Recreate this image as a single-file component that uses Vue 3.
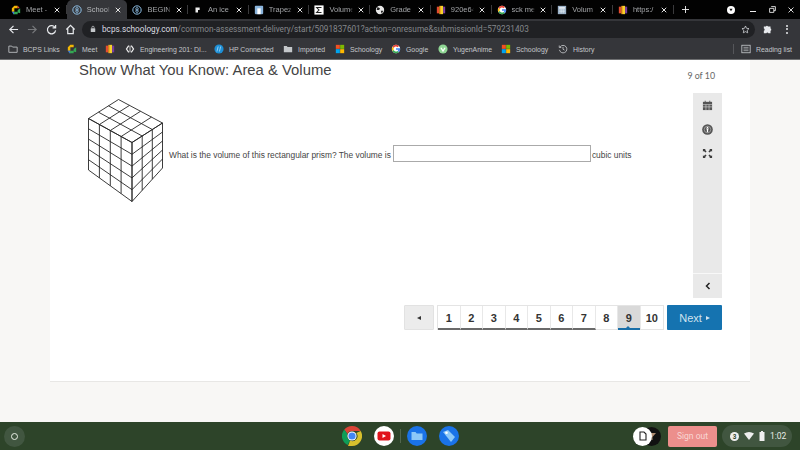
<script setup>
const tabs = [
  { id: 'meet', label: 'Meet - u', icon: 'meet' },
  { id: 's1', label: 'Schoolc', icon: 's', active: true },
  { id: 's2', label: 'BEGINN', icon: 's' },
  { id: 'ice', label: 'An ice c', icon: 'ice' },
  { id: 'trap', label: 'Trapezi', icon: 'trap' },
  { id: 'vol', label: 'Volume', icon: 'sigma' },
  { id: 'grade', label: 'Grade (', icon: 'globe' },
  { id: '920', label: '920e64', icon: 'bars' },
  { id: 'sck', label: 'sck me', icon: 'google' },
  { id: 'vol2', label: 'Volum', icon: 'calc' },
  { id: 'https', label: 'https:/', icon: 'bars' }
]

const bookmarksLeft = [
  { label: 'BCPS Links', icon: 'folderOpen', width: 59 },
  { label: 'Meet', icon: 'meet', width: 38 },
  { label: '', icon: 'bars', width: 20 },
  { label: 'Engineering 201: DI...', icon: 'code', width: 89 },
  { label: 'HP Connected', icon: 'hp', width: 69 },
  { label: 'Imported', icon: 'folder', width: 52 },
  { label: 'Schoology', icon: 'ms', width: 56 },
  { label: 'Google', icon: 'google', width: 47 },
  { label: 'YugenAnime', icon: 'yugen', width: 63 },
  { label: 'Schoology', icon: 'ms', width: 57 },
  { label: 'History', icon: 'history', width: 50 }
]

const pages = [1, 2, 3, 4, 5, 6, 7, 8, 9, 10].map(n => ({
  n,
  done: n <= 7,
  current: n === 9
}))

// prism corners, measured off the picture
const apex = [38.5, 0.5]
const left = [8.5, 19.5]
const right = [82.5, 24]
const front = [52, 43.5]
const frontBottom = [52, 102.5]
const leftBottom = [8.5, 71]
const rightBottom = [82.5, 69]

const lerp = (a, b, t) => [a[0] + (b[0] - a[0]) * t, a[1] + (b[1] - a[1]) * t]
const seg = (a, b) => `M${a[0].toFixed(1)} ${a[1].toFixed(1)}L${b[0].toFixed(1)} ${b[1].toFixed(1)}`

const prismLines = []
for (let i = 0; i <= 4; i++) {
  const t = i / 4
  prismLines.push(seg(lerp(left, front, t), lerp(leftBottom, frontBottom, t)))
  prismLines.push(seg(lerp(left, front, t), lerp(apex, right, t)))
}
for (let i = 0; i <= 3; i++) {
  const t = i / 3
  prismLines.push(seg(lerp(front, right, t), lerp(frontBottom, rightBottom, t)))
  prismLines.push(seg(lerp(left, apex, t), lerp(front, right, t)))
}
for (let i = 0; i <= 5; i++) {
  const t = i / 5
  prismLines.push(seg(lerp(left, leftBottom, t), lerp(front, frontBottom, t)))
  prismLines.push(seg(lerp(front, frontBottom, t), lerp(right, rightBottom, t)))
}
const prismPath = prismLines.join('')
</script>

<template>
  <div class="screen">
    <div class="tabstrip">
      <div v-for="tab in tabs" :key="tab.id" class="tab" :class="{ active: tab.active }">
        <svg class="favicon" viewBox="0 0 12 12">
          <template v-if="tab.icon === 'meet'">
            <path d="M1 4 4 1h4v3H4v4H1z" fill="#f2b705" />
            <path d="M8 1v3h2V3z" fill="#e8453c" />
            <path d="M1 8h3v3H3z" fill="#3b78e7" />
            <path d="M4 8h4V6l3-2v6L8 9v2H3z" fill="#34a853" />
          </template>
          <template v-else-if="tab.icon === 's'">
            <circle cx="6" cy="6" r="5" fill="none" stroke="#8fc1e8" stroke-width="1.2" />
            <circle cx="6" cy="4.6" r="1.5" fill="none" stroke="#8fc1e8" stroke-width="1" />
            <circle cx="6" cy="7.4" r="1.5" fill="none" stroke="#8fc1e8" stroke-width="1" />
          </template>
          <path v-else-if="tab.icon === 'ice'" d="M3 3h5v3H6v3H3z" fill="#eee" />
          <template v-else-if="tab.icon === 'trap'">
            <rect x="1" y="1" width="10" height="10" rx="1" fill="#8ab4dc" />
            <path d="M4 4h4v7H4z" fill="#fff" />
          </template>
          <template v-else-if="tab.icon === 'sigma'">
            <rect x="0.5" y="0.5" width="11" height="11" fill="#fff" />
            <path d="M9 3H3.2L6 6 3.2 9H9" fill="none" stroke="#222" stroke-width="1.3" />
          </template>
          <template v-else-if="tab.icon === 'globe'">
            <circle cx="6" cy="6" r="5" fill="#e8e8e8" />
            <path d="M3 2.5 6 4 5 6 2 6zM7 7h3L8 10.5z" fill="#222" />
          </template>
          <template v-else-if="tab.icon === 'bars'">
            <rect x="1" y="2" width="3" height="8" fill="#e34b2f" />
            <rect x="4" y="1" width="2" height="10" fill="#f4a81d" />
            <rect x="6" y="1" width="2.5" height="10" fill="#f6d32b" />
            <rect x="8.5" y="2" width="2.5" height="8" fill="#7a3fa0" />
          </template>
          <template v-else-if="tab.icon === 'google'">
            <circle cx="6" cy="6" r="5" fill="#fff" />
            <path d="M6 1a5 5 0 0 1 3.5 1.4L8 3.8A3 3 0 0 0 3.3 4.7L1.7 3.5A5 5 0 0 1 6 1z" fill="#ea4335" />
            <path d="M1.7 3.5 3.3 4.7a3 3 0 0 0 0 2.6L1.7 8.5a5 5 0 0 1 0-5z" fill="#fbbc05" />
            <path d="M1.7 8.5 3.3 7.3A3 3 0 0 0 8 8.3L9.5 9.6A5 5 0 0 1 1.7 8.5z" fill="#34a853" />
            <path d="M11 6c0 1.5-.5 2.7-1.5 3.6L8 8.3c.5-.4.8-.8.9-1.3H6V5h4.9z" fill="#4285f4" />
          </template>
          <template v-else>
            <rect x="1" y="1" width="10" height="10" fill="#9db3c9" />
            <rect x="2.5" y="2.5" width="7" height="2" fill="#e6edf3" />
            <path d="M2.5 6h7M2.5 8h7M5 5v5M7.5 5v5" stroke="#e6edf3" stroke-width="0.7" />
          </template>
        </svg>
        <span class="tab-label">{{ tab.label }}</span>
        <svg class="tab-close" viewBox="0 0 8 8"><path d="M1 1l6 6M7 1 1 7" /></svg>
      </div>
      <svg class="new-tab" viewBox="0 0 10 10"><path d="M5 0v10M0 5h10" /></svg>
      <div class="strip-right">
        <svg class="media-dot" viewBox="0 0 10 10">
          <circle cx="5" cy="5" r="5" fill="#fff" />
          <path d="M3 3.5h4L5 6.5z" fill="#111" />
        </svg>
        <span class="win-min"></span>
        <svg class="win-restore" viewBox="0 0 8 8">
          <path d="M2.5 .7h4.8v4.6H5.5M.7 2.7h4.8v4.6H.7z" />
        </svg>
        <svg class="win-close" viewBox="0 0 8 8"><path d="M.7.7l6.6 6.6M7.3.7.7 7.3" /></svg>
      </div>
    </div>

    <div class="toolbar">
      <svg class="nav" viewBox="0 0 12 12"><path d="M11 6H2M6 2 2 6l4 4" stroke="#e8eaed" /></svg>
      <svg class="nav" viewBox="0 0 12 12"><path d="M1 6h9M6 2l4 4-4 4" stroke="#77797c" /></svg>
      <svg class="nav" viewBox="0 0 12 12"><path d="M10 4A4.5 4.5 0 1 0 10.5 7M10.5 1v3.3H7.2" stroke="#e8eaed" /></svg>
      <svg class="nav" viewBox="0 0 12 12"><path d="M1.5 6 6 1.5 10.500 6M3 5v5.500h6V5" stroke="#e8eaed" /></svg>
      <div class="omnibox">
        <svg class="lock" viewBox="0 0 8 10">
          <rect x="1" y="4" width="6" height="5" rx="0.8" fill="#c4c7ca" />
          <path d="M2.5 4V2.8a1.5 1.5 0 0 1 3 0V4" fill="none" stroke="#c4c7ca" />
        </svg>
        <span class="url"><b>bcps.schoology.com</b>/common-assessment-delivery/start/5091837601?action=onresume&amp;submissionId=579231403</span>
        <svg class="star" viewBox="0 0 12 12">
          <path d="M6 1.3 7.400 4.400l3.300.4-2.400 2.300.6 3.300L6 8.800 3.100 10.400l.6-3.300L1.300 4.800l3.300-.4z" />
        </svg>
      </div>
      <svg class="puzzle" viewBox="0 0 12 12">
        <path d="M1 3h2.5a1.3 1.3 0 0 1 2.500 0H9v2.500a1.300 1.300 0 0 1 0 2.500V11H6.500a1.300 1.300 0 0 0-2.500 0H1V8a1.300 1.300 0 0 0 0-2.500z" fill="#e8eaed" />
      </svg>
      <div class="dots"><i></i><i></i><i></i></div>
    </div>

    <div class="bookmarks">
      <div
        v-for="(b, i) in bookmarksLeft"
        :key="i"
        class="bookmark"
        :style="{ width: b.width + 'px' }"
      >
        <svg class="bm-icon" viewBox="0 0 12 12">
          <template v-if="b.icon === 'folderOpen'">
            <path d="M1 2.500h3.500l1 1.200H11V10H1z" fill="none" stroke="#c4c7ca" />
          </template>
          <path v-else-if="b.icon === 'folder'" d="M1 2.500h3.500l1 1.200H11V10H1z" fill="#c4c7ca" />
          <template v-else-if="b.icon === 'meet'">
            <path d="M1 4 4 1h4v3H4v4H1z" fill="#f2b705" />
            <path d="M1 8h3v3H3z" fill="#3b78e7" />
            <path d="M4 8h4V6l3-2v6L8 9v2H3z" fill="#34a853" />
          </template>
          <template v-else-if="b.icon === 'bars'">
            <rect x="1" y="2" width="3" height="8" fill="#e34b2f" />
            <rect x="4" y="1" width="2" height="10" fill="#f4a81d" />
            <rect x="6" y="1" width="2.5" height="10" fill="#f6d32b" />
            <rect x="8.5" y="2" width="2.5" height="8" fill="#7a3fa0" />
          </template>
          <template v-else-if="b.icon === 'code'">
            <path d="M4.500 2 1.800 6l2.700 4M7.500 2l2.700 4-2.700 4" fill="none" stroke="#eee" stroke-width="1.500" />
            <path d="M6 2v8" stroke="#eee" />
          </template>
          <template v-else-if="b.icon === 'hp'">
            <circle cx="6" cy="6" r="5.500" fill="#1d8fd6" />
            <path d="M5 3 3.500 9M8 3 6.500 9" stroke="#d6eefc" stroke-width="0.8" />
          </template>
          <template v-else-if="b.icon === 'ms'">
            <rect x="1" y="1" width="4.800" height="4.800" fill="#f25022" />
            <rect x="6.200" y="1" width="4.800" height="4.800" fill="#7fba00" />
            <rect x="1" y="6.200" width="4.800" height="4.800" fill="#00a4ef" />
            <rect x="6.200" y="6.200" width="4.800" height="4.800" fill="#ffb900" />
          </template>
          <template v-else-if="b.icon === 'google'">
            <circle cx="6" cy="6" r="5" fill="#fff" />
            <path d="M6 1a5 5 0 0 1 3.500 1.400L8 3.800A3 3 0 0 0 3.300 4.700L1.700 3.500A5 5 0 0 1 6 1z" fill="#ea4335" />
            <path d="M1.700 3.500 3.300 4.700a3 3 0 0 0 0 2.600L1.700 8.500a5 5 0 0 1 0-5z" fill="#fbbc05" />
            <path d="M1.700 8.500 3.300 7.300A3 3 0 0 0 8 8.300L9.500 9.600A5 5 0 0 1 1.700 8.500z" fill="#34a853" />
            <path d="M11 6c0 1.500-.5 2.700-1.500 3.600L8 8.300c.5-.4.800-.8.900-1.300H6V5h4.900z" fill="#4285f4" />
          </template>
          <template v-else-if="b.icon === 'yugen'">
            <circle cx="6" cy="6" r="5.500" fill="#8fd694" />
            <path d="M3.500 4.500 6 8.500l2.500-4" fill="none" stroke="#fff" stroke-width="1.500" />
          </template>
          <template v-else>
            <path d="M2.500 3.500A4.500 4.500 0 1 1 1.700 7M1.500 1.800v2.400h2.400M6 3.500V6.300l1.800 1" fill="none" stroke="#c4c7ca" />
          </template>
        </svg>
        <span v-if="b.label" class="bm-label">{{ b.label }}</span>
      </div>
      <div class="reading">
        <svg class="bm-icon" viewBox="0 0 12 12">
          <rect x="1" y="1.500" width="10" height="9" fill="none" stroke="#c4c7ca" />
          <path d="M3 4h6M3 6h6M3 8h6" stroke="#c4c7ca" stroke-width="0.8" />
        </svg>
        <span class="bm-label">Reading list</span>
      </div>
    </div>

    <main class="page">
      <section class="card">
        <div class="card-main">
          <h1 class="title">Show What You Know: Area &amp; Volume</h1>
          <div class="question">
            <svg class="prism" viewBox="0 0 89 104" width="89" height="104">
              <path :d="prismPath" fill="none" stroke="#262626" stroke-width="0.9" />
            </svg>
            <span class="q-text">What is the volume of this rectangular prism? The volume is</span>
            <input class="answer" type="text" />
            <span class="q-text">cubic units</span>
          </div>
        </div>

        <div class="side">
          <div class="counter">9 of 10</div>
          <div class="tools">
            <svg class="tool" viewBox="0 0 12 12">
              <rect x="1" y="2" width="10" height="9" fill="#555" />
              <path d="M1 5h10M1 7.500h10M4.300 5v6M7.700 5v6" stroke="#e9e9e9" stroke-width="0.6" />
              <path d="M3.500 .8v2M8.500 .8v2" stroke="#555" />
            </svg>
            <svg class="tool" viewBox="0 0 12 12">
              <circle cx="6" cy="6" r="5.800" fill="#555" />
              <circle cx="6" cy="6" r="3.600" fill="none" stroke="#ddd" stroke-width="0.5" />
              <circle cx="6" cy="3.800" r="0.900" fill="#fff" />
              <path d="M4.300 5h3.400L6.700 6.200V9H5.300V6.200z" fill="#fff" />
            </svg>
            <svg class="tool" viewBox="0 0 12 12">
              <path d="M1 1h3.200L3.200 2l1.800 1.800-1.200 1.200L2 3.200 1 4.200zM11 1v3.200L10 3.200 8.200 5 7 3.800 8.800 2 7.800 1zM1 11V7.800l1 1L3.800 7 5 8.200 3.200 10l1 1zM11 11H7.800l1-1L7 8.200 8.200 7 10 8.800l1-1z" fill="#3c3c3c" />
            </svg>
            <div class="collapse">
              <svg viewBox="0 0 8 8" width="8" height="8"><path d="M5.500 1 2.500 4l3 3" fill="none" stroke="#222" stroke-width="1.500" /></svg>
            </div>
          </div>
        </div>

        <nav class="pager">
          <button class="prev" type="button"><span class="arrow-left"></span></button>
          <div class="pages">
            <div
              v-for="p in pages"
              :key="p.n"
              class="page-btn"
              :class="{ done: p.done, current: p.current }"
            >{{ p.n }}</div>
          </div>
          <button class="next" type="button">Next<span class="arrow-right"></span></button>
        </nav>
      </section>
    </main>

    <footer class="shelf">
      <div class="launcher"><span></span></div>
      <div class="apps">
        <div class="app">
          <svg viewBox="0 0 20 20" width="20" height="20">
            <path d="M10 0a10 10 0 0 1 8.700 5H10a5 5 0 0 0-4.600 3L2.300 3.500A10 10 0 0 1 10 0z" fill="#db4437" />
            <path d="M2.300 3.500 5.400 8a5 5 0 0 0 2.700 6.600L5.600 19A10 10 0 0 1 2.300 3.500z" fill="#0f9d58" />
            <path d="M18.700 5A10 10 0 0 1 10 20H6l2.100-5.400A5 5 0 0 0 14.300 7z" fill="#d7c02d" />
            <circle cx="10" cy="10" r="4.600" fill="#fff" />
            <circle cx="10" cy="10" r="3.600" fill="#4285f4" />
          </svg>
          <i class="dot"></i>
        </div>
        <div class="app">
          <svg viewBox="0 0 20 20" width="20" height="20">
            <circle cx="10" cy="10" r="10" fill="#fff" />
            <rect x="3.500" y="5.500" width="13" height="9" rx="2" fill="#e0141c" />
            <path d="M8.500 8v4l3.500-2z" fill="#fff" />
          </svg>
        </div>
        <div class="app-sep"></div>
        <div class="app">
          <svg viewBox="0 0 20 20" width="20" height="20">
            <circle cx="10" cy="10" r="10" fill="#1a73e8" />
            <path d="M4.500 6h4l1.200 1.500h5.800V14h-11z" fill="#8cc8f8" />
          </svg>
          <i class="dot"></i>
        </div>
        <div class="app">
          <svg viewBox="0 0 20 20" width="20" height="20">
            <circle cx="10" cy="10" r="10" fill="#1a73e8" />
            <path d="M4 6 9 4l7 7-4 5z" fill="#8cc8f8" />
            <circle cx="7.500" cy="6.800" r="1.300" fill="#fff" />
          </svg>
          <i class="dot"></i>
        </div>
      </div>
      <div class="tray">
        <div class="holding">
          <div class="hold-file">
            <svg viewBox="0 0 10 10" width="10" height="10"><path d="M2 1h4l2 2v6H2z" fill="none" stroke="#222" stroke-width="1.100" /></svg>
          </div>
          <div class="hold-img">
            <svg viewBox="0 0 10 10" width="10" height="10"><path d="M1 2h8L5.500 6v3h-1V6z" fill="#b08d72" /></svg>
          </div>
        </div>
        <div class="signout">Sign out</div>
        <div class="status">
          <span class="badge">3</span>
          <svg viewBox="0 0 10 8" width="10" height="8"><path d="M0 1.500Q5-1.500 10 1.500L5 8z" fill="#eee" /></svg>
          <svg viewBox="0 0 6 10" width="6" height="10"><path d="M2 0h2v1h1.500v9h-5V1H2z" fill="#eee" /></svg>
          <span class="clock">1:02</span>
        </div>
      </div>
    </footer>
  </div>
</template>

<style>
html, body { margin: 0; padding: 0; }
</style>

<style scoped>
.screen {
  width: 800px;
  height: 450px;
  display: flex;
  flex-direction: column;
  overflow: hidden;
  font-family: "Liberation Sans", Arial, sans-serif;
  background: #f8f7f5;
}

/* browser chrome */
.tabstrip {
  height: 19px;
  flex: none;
  background: #020202;
  display: flex;
  align-items: center;
  padding-left: 6px;
}
.tab {
  width: 60.7px;
  height: 19px;
  box-sizing: border-box;
  padding: 0 6.5px 0 5px;
  display: flex;
  align-items: center;
  gap: 5px;
  color: #a4a6a9;
  font-size: 7.5px;
  position: relative;
}
.tab:not(:last-of-type)::after {
  content: "";
  position: absolute;
  right: 0;
  top: 5px;
  bottom: 5px;
  width: 1px;
  background: #3a3a3c;
}
.tab.active {
  background: #35363a;
  border-radius: 5px 5px 0 0;
  color: #b4b6b9;
}
.tab.active::after { display: none; }
.favicon { width: 10px; height: 10px; flex: none; }
.tab-label {
  flex: 1;
  min-width: 0;
  overflow: hidden;
  white-space: nowrap;
  -webkit-mask-image: linear-gradient(to right, #000 85%, transparent);
  mask-image: linear-gradient(to right, #000 85%, transparent);
}
.tab-close {
  width: 6px;
  height: 6px;
  flex: none;
  stroke: #e6e6e6;
  stroke-width: 1.3;
  fill: none;
}
.new-tab {
  width: 7px;
  height: 7px;
  margin-left: 8px;
  stroke: #f0f0f0;
  stroke-width: 1.3;
  flex: none;
}
.strip-right {
  margin-left: auto;
  display: flex;
  align-items: center;
  padding-right: 6px;
}
.media-dot { width: 8px; height: 8px; margin-right: 15px; }
.win-min {
  width: 6px;
  height: 1.5px;
  background: #eee;
  margin: 4px 12.5px 0 0;
}
.win-restore {
  width: 7px;
  height: 7px;
  margin-right: 12.5px;
  fill: none;
  stroke: #eee;
  stroke-width: 1;
}
.win-close {
  width: 6px;
  height: 6px;
  fill: none;
  stroke: #eee;
  stroke-width: 1.2;
}
.toolbar {
  height: 20px;
  flex: none;
  background: #35363a;
  display: flex;
  align-items: center;
  padding-left: 7.5px;
}
.nav {
  width: 11px;
  height: 11px;
  margin-right: 8px;
  fill: none;
  stroke-width: 1.3;
  flex: none;
}
.omnibox {
  width: 673px;
  height: 17px;
  margin-left: -1.5px;
  background: #202124;
  border-radius: 9px;
  display: flex;
  align-items: center;
  padding-left: 7.5px;
  box-sizing: border-box;
}
.lock { width: 6px; height: 8px; flex: none; margin-right: 6.5px; }
.url {
  font-size: 8.22px;
  color: #85888c;
  white-space: nowrap;
  font-family: "Roboto", "Liberation Sans", sans-serif;
}
.url b { color: #dadce0; font-weight: 400; }
.star {
  width: 9px;
  height: 9px;
  margin-left: auto;
  margin-right: 5.5px;
  fill: none;
  stroke: #dadce0;
  stroke-width: 1;
  flex: none;
}
.puzzle { width: 10px; height: 10px; margin-left: 8px; flex: none; }
.dots {
  display: flex;
  flex-direction: column;
  gap: 1.5px;
  margin-left: 13px;
}
.dots i {
  width: 2px;
  height: 2px;
  border-radius: 50%;
  background: #e8eaed;
  display: block;
}
.bookmarks {
  height: 21px;
  flex: none;
  box-sizing: border-box;
  background: #35363a;
  border-bottom: 1px solid #6e6f71;
  display: flex;
  align-items: center;
  padding-left: 8px;
}
.bookmark {
  display: flex;
  align-items: center;
  gap: 5px;
  flex: none;
  overflow: hidden;
}
.bm-icon { width: 10px; height: 10px; flex: none; }
.bm-label {
  font-size: 6.9px;
  color: #c4c7ca;
  white-space: nowrap;
}
.reading {
  margin-left: auto;
  padding-left: 7px;
  margin-right: 8px;
  border-left: 1px solid #55565a;
  display: flex;
  align-items: center;
  gap: 5px;
}

/* page */
.page {
  flex: 1;
  min-height: 0;
  padding: 0 50px;
}
.card {
  height: 322px;
  background: #fff;
  border-bottom: 1px solid #e8e7e5;
  box-sizing: border-box;
  position: relative;
  display: grid;
  grid-template-columns: 1fr 29px;
  grid-template-rows: 1fr auto;
  padding: 0 28px 52px 29px;
}
.card-main { min-width: 0; }
.title {
  margin: 2px 0 0;
  font-size: 14.85px;
  line-height: 17px;
  font-weight: 400;
  color: #444;
}
.question {
  margin-top: 20px;
  display: flex;
  align-items: center;
  height: 104px;
  margin-left: 1px;
  width: 570px;
}
.prism { flex: none; }
.q-text {
  font-size: 8.4px;
  color: #444;
  white-space: nowrap;
  margin-top: 8px;
}
.answer {
  width: 198px;
  height: 17px;
  box-sizing: border-box;
  margin: 5px 1px 0 2px;
  border: 1px solid #aaa;
  background: #fff;
  padding: 0;
  flex: none;
}
.side {
  position: relative;
  display: flex;
  flex-direction: column;
}
.counter {
  margin: 10px 0 0 -18px;
  width: 40px;
  text-align: right;
  font-size: 8.8px;
  color: #666;
  font-family: "Lato", sans-serif;
  height: 23px;
}
.tools {
  width: 29px;
  height: 205px;
  background: #e9e9e9;
  display: flex;
  flex-direction: column;
  align-items: center;
  padding-top: 6.5px;
  box-sizing: border-box;
  gap: 13px;
}
.tool { width: 11px; height: 11px; flex: none; }
.collapse {
  margin-top: auto;
  width: 100%;
  height: 24px;
  border-top: 1px solid #f8f8f8;
  display: flex;
  align-items: center;
  justify-content: center;
}
.pager {
  grid-column: 1 / -1;
  justify-self: end;
  display: flex;
  margin-top: 7px;
  height: 25px;
}
.prev {
  width: 30px;
  height: 25px;
  background: #ececec;
  border: 1px solid #e2e2e2;
  border-radius: 1px;
  display: flex;
  align-items: center;
  justify-content: center;
  padding: 0;
}
.arrow-left {
  border-style: solid;
  border-width: 2.5px 4px 2.5px 0;
  border-color: transparent #333 transparent transparent;
}
.pages {
  display: flex;
  margin-left: 3px;
  border: 1px solid #e4e4e4;
  box-sizing: border-box;
  height: 25px;
}
.page-btn {
  width: 22.5px;
  height: 23px;
  box-sizing: border-box;
  border-right: 1px solid #e8e8e8;
  display: flex;
  align-items: center;
  justify-content: center;
  font-size: 11px;
  font-weight: 700;
  color: #333;
  position: relative;
}
.page-btn:last-child { border-right: 0; }
.page-btn.done { border-bottom: 2px solid #6a6a6a; height: 24px; padding-top: 1px; }
.page-btn.current { background: #d9d9d9; }
.page-btn.current::after {
  content: "";
  position: absolute;
  left: 0;
  right: 0;
  bottom: -1px;
  height: 2px;
  background: #1a6fa8;
}
.page-btn.current::before {
  content: "";
  position: absolute;
  left: 50%;
  bottom: 1px;
  margin-left: -2.5px;
  border-style: solid;
  border-width: 0 2.5px 2px;
  border-color: transparent transparent #1a6fa8;
}
.next {
  margin-left: 3px;
  width: 55px;
  height: 25px;
  background: #1573b0;
  border: 0;
  border-radius: 1px;
  color: #d2e3ef;
  font-family: "Liberation Sans", Arial, sans-serif;
  font-size: 11px;
  display: flex;
  align-items: center;
  justify-content: center;
  gap: 4px;
  padding: 0;
}
.arrow-right {
  border-style: solid;
  border-width: 2.5px 0 2.5px 4px;
  border-color: transparent transparent transparent #d2e3ef;
}

/* chromeos shelf */
.shelf {
  height: 28px;
  flex: none;
  background: #2d4429;
  display: flex;
  align-items: center;
  position: relative;
}
.launcher {
  width: 21px;
  height: 21px;
  margin-left: 4px;
  border-radius: 50%;
  background: #415640;
  display: flex;
  align-items: center;
  justify-content: center;
}
.launcher span {
  width: 5px;
  height: 5px;
  border: 1.5px solid #e9efe6;
  border-radius: 50%;
}
.apps {
  display: flex;
  align-items: center;
  gap: 12px;
  margin-left: 317px;
}
.app {
  position: relative;
  width: 20px;
  height: 20px;
}
.app svg { display: block; }
.dot {
  position: absolute;
  left: 8px;
  bottom: -5px;
  width: 5px;
  height: 1px;
  background: #dfe5dc;
}
.app-sep {
  width: 1px;
  height: 14px;
  background: #52664e;
  margin: 0 -6px;
}
.tray {
  margin-left: auto;
  display: flex;
  align-items: center;
  padding-right: 8px;
}
.holding {
  display: flex;
  width: 29px;
  height: 21px;
  position: relative;
  margin-right: 6px;
}
.hold-file, .hold-img {
  width: 19px;
  height: 19px;
  border-radius: 50%;
  display: flex;
  align-items: center;
  justify-content: center;
  margin-top: 1px;
}
.hold-file { background: #fff; position: relative; z-index: 1; }
.hold-img { background: #111; margin-left: -10px; }
.signout {
  width: 49px;
  height: 21px;
  background: #ec8f8c;
  border-radius: 2px;
  color: #f8d6d4;
  font-size: 8.5px;
  display: flex;
  align-items: center;
  justify-content: center;
  font-family: "Roboto", sans-serif;
}
.status {
  margin-left: 5px;
  height: 22px;
  width: 70px;
  box-sizing: border-box;
  background: #415640;
  border-radius: 11px;
  display: flex;
  align-items: center;
  gap: 5px;
  padding-left: 8px;
}
.badge {
  width: 9px;
  height: 9px;
  border-radius: 50%;
  background: #eee;
  color: #2d4429;
  font-size: 6.5px;
  font-weight: 700;
  display: flex;
  align-items: center;
  justify-content: center;
}
.clock {
  font-size: 8.5px;
  color: #e8ece6;
  font-family: "Roboto", sans-serif;
}
</style>
